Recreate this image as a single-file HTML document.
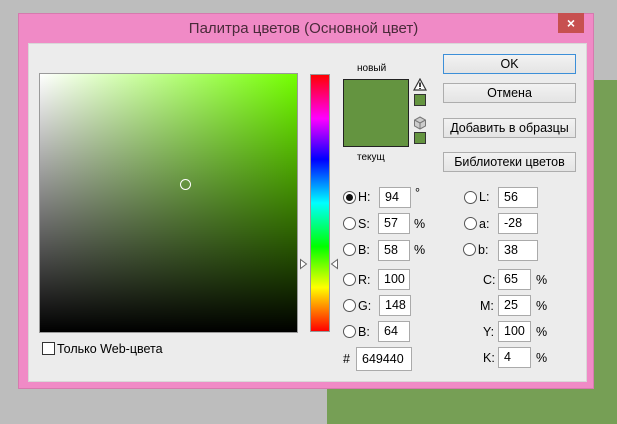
<!DOCTYPE html>
<html><head><meta charset="utf-8"><style>
*{margin:0;padding:0;box-sizing:border-box}
body{width:617px;height:424px;background:#bdbdbd;position:relative;overflow:hidden;font-family:"Liberation Sans","DejaVu Sans",sans-serif;font-size:12px;color:#000}
.a{position:absolute}
.inp{position:absolute;background:#fff;border:1px solid #aaa;height:21px;line-height:19px;padding-left:5px;font-size:12.5px}
.rad{position:absolute;width:13px;height:13px;border:1px solid #555;border-radius:50%;background:#fff}
.lab{position:absolute;font-size:12.5px;line-height:14px}
.btn{position:absolute;left:443px;width:133px;height:20px;border:1px solid #adadad;background:linear-gradient(#f2f2f2,#e4e4e4);text-align:center;line-height:18px;font-size:12.5px}
</style></head><body>
<div class="a" style="left:327px;top:80px;width:290px;height:344px;background:#769f55"></div>
<div class="a" style="left:18px;top:13px;width:576px;height:376px;background:#f08ac6;border:1px solid #d67aae"></div>
<div class="a" style="left:0;top:20px;width:617px;text-align:center;font-size:15px;color:#4a2a3a;padding-right:10px">Палитра цветов (Основной цвет)</div>
<div class="a" style="left:558px;top:13px;width:26px;height:20px;background:#c75050;color:#fff;text-align:center;font-size:14px;line-height:20px;font-weight:bold">×</div>
<div class="a" style="left:28px;top:43px;width:559px;height:339px;background:#ececec;border:1px solid #d8d8d8"></div>
<!-- field -->
<div class="a" style="left:39px;top:73px;width:259px;height:260px;border:1px solid #9a9a9a;background:linear-gradient(to top,#000,rgba(0,0,0,0)),linear-gradient(to right,#fff,#73ff00)"></div>
<div class="a" style="left:180px;top:179px;width:11px;height:11px;border:1px solid #fff;border-radius:50%"></div>
<!-- hue -->
<div class="a" style="left:310px;top:74px;width:20px;height:258px;border:1px solid #999;background:linear-gradient(#ff0000,#ff00ff 17%,#0000ff 33%,#00ffff 50%,#00ff00 67%,#ffff00 83%,#ff0000)"></div>
<svg class="a" style="left:299px;top:258px" width="40" height="12"><path d="M1.5 1.5L7.5 6L1.5 10.5Z" fill="#fff" stroke="#666"/><path d="M38.5 1.5L32.5 6L38.5 10.5Z" fill="#fff" stroke="#666"/></svg>
<div class="a" style="left:42px;top:342px;width:13px;height:13px;border:1px solid #333;background:#fff"></div>
<div class="lab" style="left:57px;top:342px">Только Web-цвета</div>
<!-- swatch -->
<div class="lab" style="left:357px;top:62px;font-size:10px">новый</div>
<div class="a" style="left:343px;top:79px;width:66px;height:68px;border:1px solid #222;background:#649440"></div>
<div class="lab" style="left:357px;top:151px;font-size:10px">текущ</div>
<svg class="a" style="left:413px;top:78px" width="14" height="14"><path d="M7 1L13 12H1Z" fill="#fff" stroke="#333" stroke-width="1.2"/><path d="M7 4.5V9M7 10v1" stroke="#000" stroke-width="1.5"/></svg>
<div class="a" style="left:414px;top:94px;width:12px;height:12px;border:1px solid #333;background:#649440"></div>
<svg class="a" style="left:413px;top:116px" width="14" height="14"><path d="M7 1L12.5 4V10L7 13L1.5 10V4Z" fill="#ccc" stroke="#777"/><path d="M1.5 4L7 7L12.5 4M7 7V13" fill="none" stroke="#777"/></svg>
<div class="a" style="left:414px;top:132px;width:12px;height:12px;border:1px solid #333;background:#649440"></div>
<!-- buttons -->
<div class="btn" style="top:54px;border-color:#3c8fd8">OK</div>
<div class="btn" style="top:83px">Отмена</div>
<div class="btn" style="top:118px">Добавить в образцы</div>
<div class="btn" style="top:152px">Библиотеки цветов</div>
<!-- left column -->
<div class="rad" style="left:343px;top:191px"><div class="a" style="left:2px;top:2px;width:7px;height:7px;border-radius:50%;background:#111"></div></div>
<div class="lab" style="left:358px;top:190px">H:</div><div class="inp" style="left:379px;top:187px;width:32px">94</div><div class="lab" style="left:415px;top:186px">°</div>
<div class="rad" style="left:343px;top:217px"></div><div class="lab" style="left:358px;top:217px">S:</div><div class="inp" style="left:378px;top:213px;width:32px">57</div><div class="lab" style="left:414px;top:217px">%</div>
<div class="rad" style="left:343px;top:243px"></div><div class="lab" style="left:358px;top:243px">B:</div><div class="inp" style="left:378px;top:240px;width:32px">58</div><div class="lab" style="left:414px;top:243px">%</div>
<div class="rad" style="left:343px;top:273px"></div><div class="lab" style="left:358px;top:273px">R:</div><div class="inp" style="left:378px;top:269px;width:32px">100</div>
<div class="rad" style="left:343px;top:299px"></div><div class="lab" style="left:358px;top:299px">G:</div><div class="inp" style="left:379px;top:295px;width:32px">148</div>
<div class="rad" style="left:343px;top:325px"></div><div class="lab" style="left:358px;top:325px">B:</div><div class="inp" style="left:378px;top:321px;width:32px">64</div>
<div class="lab" style="left:343px;top:352px">#</div><div class="inp" style="left:356px;top:347px;width:56px;height:24px;line-height:22px">649440</div>
<!-- right column -->
<div class="rad" style="left:464px;top:191px"></div><div class="lab" style="left:479px;top:190px">L:</div><div class="inp" style="left:498px;top:187px;width:40px">56</div>
<div class="rad" style="left:464px;top:217px"></div><div class="lab" style="left:479px;top:217px">a:</div><div class="inp" style="left:498px;top:213px;width:40px">-28</div>
<div class="rad" style="left:463px;top:243px"></div><div class="lab" style="left:478px;top:243px">b:</div><div class="inp" style="left:498px;top:240px;width:40px">38</div>
<div class="lab" style="left:483px;top:273px">C:</div><div class="inp" style="left:498px;top:269px;width:33px">65</div><div class="lab" style="left:536px;top:273px">%</div>
<div class="lab" style="left:480px;top:299px">M:</div><div class="inp" style="left:498px;top:295px;width:33px">25</div><div class="lab" style="left:536px;top:299px">%</div>
<div class="lab" style="left:483px;top:325px">Y:</div><div class="inp" style="left:498px;top:321px;width:33px">100</div><div class="lab" style="left:536px;top:325px">%</div>
<div class="lab" style="left:483px;top:351px">K:</div><div class="inp" style="left:498px;top:347px;width:33px">4</div><div class="lab" style="left:536px;top:351px">%</div>
</body></html>
